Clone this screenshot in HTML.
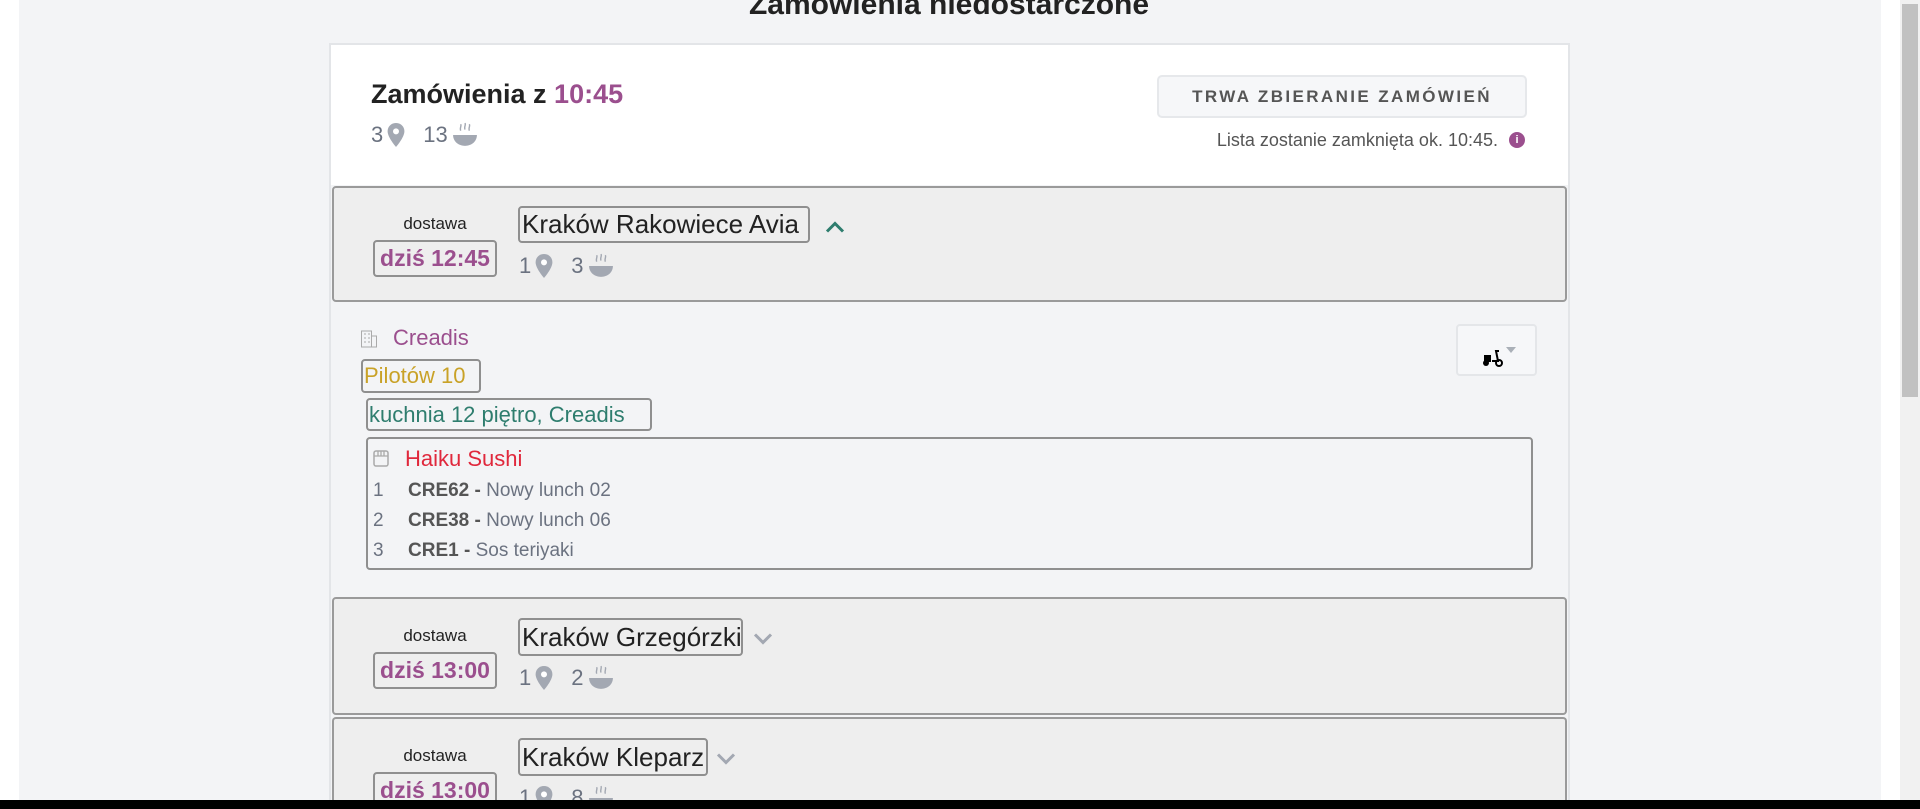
<!DOCTYPE html>
<html style="width:1920px;height:809px;overflow:hidden"><head><meta charset="utf-8"><style>
*{box-sizing:border-box;margin:0;padding:0}
html,body{width:1920px;height:809px;overflow:hidden}
body{background:#fff;font-family:"Liberation Sans",sans-serif;position:relative;color:#222;white-space:nowrap}
.a{position:absolute}
.bg{left:19px;top:0;width:1862px;height:809px;background:#f3f4f6}
.sb{left:1900px;top:0;width:20px;height:809px;background:#f1f1f1}
.thumb{left:1902px;top:4px;width:16px;height:393px;background:#c1c1c1}
.card{left:329px;top:43px;width:1241px;height:766px;background:#f3f4f6;border:2px solid #e3e5e8;border-bottom:none}
.hdr{left:331px;top:45px;width:1237px;height:140px;background:#fff}
.grp{background:#eeeeee;border:2px solid #9a9a9a;border-radius:4px;left:332px;width:1235px}
.bx{border:2px solid #8f8f8f;border-radius:4px}
.pur{color:#9b4f8e}
.gray{color:#6b7280}
.cnt{font-size:22px;color:#6b7280;display:flex;align-items:center;gap:4px}
</style></head><body>
<div class="a bg"></div>
<div class="a sb"></div><div class="a thumb"></div>
<div class="a" style="left:0;top:-12px;width:1898px;text-align:center;font-size:30px;font-weight:bold;color:#222">Zamówienia niedostarczone</div>
<div class="a card"></div>
<div class="a hdr"></div>
<div class="a" style="left:371px;top:79px;font-size:27px;font-weight:bold">Zamówienia z <span class="pur">10:45</span></div>

<svg width="0" height="0" style="position:absolute"><defs>
<symbol id="pin" viewBox="0 0 14 20"><path d="M7 0C3 0 0 3 0 7c0 5 7 13 7 13s7-8 7-13C14 3 11 0 7 0z" fill="#a3a8b2"/><circle cx="7" cy="7" r="2.5" fill="#fff"/></symbol>
<symbol id="bowl" viewBox="0 0 24 24"><path d="M1 12h22c0 6-5 10-11 10S1 18 1 12z" fill="#a3a8b2"/><path d="M8 2c1 2-1 3 0 6M12 1c1 2-1 3 0 6M16 2c1 2-1 3 0 6" stroke="#a3a8b2" stroke-width="1.3" fill="none"/></symbol>
<symbol id="chev" viewBox="0 0 20 12"><path d="M2 10l8-8 8 8" stroke="currentColor" stroke-width="3" fill="none"/></symbol>
</defs></svg>

<div class="a cnt" style="left:371px;top:122px">3 <svg width="18" height="24"><use href="#pin"/></svg><span style="margin-left:14px">13</span><svg width="26" height="26"><use href="#bowl"/></svg></div>

<div class="a" style="left:1157px;top:75px;width:370px;height:43px;background:#f6f7f9;border:2px solid #e6e8eb;border-radius:5px;font-size:17px;font-weight:bold;letter-spacing:2.4px;color:#555;text-align:center;line-height:39px">TRWA ZBIERANIE ZAMÓWIEŃ</div>
<div class="a" style="left:1100px;top:130px;width:398px;text-align:right;font-size:18px;color:#555">Lista zostanie zamknięta ok. 10:45.</div>
<div class="a" style="left:1509px;top:132px;width:16px;height:16px;border-radius:50%;background:#9b4f8e;color:#fff;font-size:11px;font-weight:bold;text-align:center;line-height:16px">i</div>

<!-- group 1 -->
<div class="a grp" style="top:186px;height:116px"></div>
<div class="a" style="left:385px;top:214px;width:100px;text-align:center;font-size:17px">dostawa</div>
<div class="a bx pur" style="left:373px;top:240px;width:124px;height:37px;font-size:23px;font-weight:bold;text-align:center;line-height:33px">dziś 12:45</div>
<div class="a bx" style="left:518px;top:206px;width:292px;height:37px;font-size:26px;line-height:33px;padding-left:2px">Kraków Rakowiece Avia</div>
<svg class="a" style="left:825px;top:221px;color:#2e7d6e" width="20" height="13"><use href="#chev"/></svg>
<div class="a cnt" style="left:519px;top:253px">1 <svg width="18" height="24"><use href="#pin"/></svg><span style="margin-left:14px">3</span><svg width="26" height="26"><use href="#bowl"/></svg></div>

<!-- expanded -->
<svg class="a" style="left:361px;top:330px" width="16" height="18"><rect x="0.5" y="1" width="10" height="16" fill="none" stroke="#aaa"/><rect x="10.5" y="6" width="5" height="11" fill="none" stroke="#aaa"/><path d="M3 4h2M7 4h2M3 8h2M7 8h2M3 12h2M7 12h2" stroke="#aaa"/></svg>
<div class="a pur" style="left:393px;top:325px;font-size:22px">Creadis</div>
<div class="a bx" style="left:361px;top:359px;width:120px;height:34px;font-size:22px;color:#c9a227;line-height:30px;padding-left:1px">Pilotów 10</div>
<div class="a bx" style="left:366px;top:398px;width:286px;height:33px;font-size:22px;color:#2e7d6e;line-height:29px;padding-left:1px">kuchnia 12 piętro, Creadis</div>
<div class="a bx" style="left:366px;top:437px;width:1167px;height:133px"></div>
<svg class="a" style="left:373px;top:450px" width="16" height="17"><rect x="1" y="1" width="14" height="15" rx="2" fill="none" stroke="#aaa" stroke-width="1.5"/><path d="M1 6h14M5 1v5M8 1v5M11 1v5" stroke="#aaa" stroke-width="1.3"/></svg>
<div class="a" style="left:405px;top:446px;font-size:22px;color:#e0283c">Haiku Sushi</div>
<div class="a gray" style="left:373px;top:476px;font-size:19px;line-height:30px">1<br>2<br>3</div>
<div class="a gray" style="left:408px;top:476px;font-size:19px;line-height:30px"><b style="color:#555">CRE62 -</b> Nowy lunch 02<br><b style="color:#555">CRE38 -</b> Nowy lunch 06<br><b style="color:#555">CRE1 -</b> Sos teriyaki</div>
<div class="a" style="left:1456px;top:324px;width:81px;height:52px;border:2px solid #e4e6e9;border-radius:4px;background:#f6f7f9"></div>
<svg class="a" style="left:1482px;top:347px" width="38" height="22"><path d="M2 8h7v7H2z" fill="#000"/><circle cx="4" cy="16" r="3" fill="#000"/><path d="M10 14h6l-2-10h3" stroke="#000" stroke-width="2" fill="none"/><circle cx="17" cy="16" r="3" fill="none" stroke="#000" stroke-width="2"/><path d="M24 0h10l-5 6z" fill="#aab0b8"/></svg>

<!-- group 2 -->
<div class="a grp" style="top:597px;height:118px"></div>
<div class="a" style="left:385px;top:626px;width:100px;text-align:center;font-size:17px">dostawa</div>
<div class="a bx pur" style="left:373px;top:652px;width:124px;height:37px;font-size:23px;font-weight:bold;text-align:center;line-height:33px">dziś 13:00</div>
<div class="a bx" style="left:518px;top:618px;width:225px;height:38px;font-size:26px;line-height:34px;padding-left:2px">Kraków Grzegórzki</div>
<svg class="a" style="left:753px;top:633px;color:#a3a8b2" width="20" height="13"><use href="#chev" transform="rotate(180 10 6)"/></svg>
<div class="a cnt" style="left:519px;top:665px">1 <svg width="18" height="24"><use href="#pin"/></svg><span style="margin-left:14px">2</span><svg width="26" height="26"><use href="#bowl"/></svg></div>

<!-- group 3 -->
<div class="a grp" style="top:717px;height:92px;border-bottom:none;border-radius:4px 4px 0 0"></div>
<div class="a" style="left:385px;top:746px;width:100px;text-align:center;font-size:17px">dostawa</div>
<div class="a bx pur" style="left:373px;top:772px;width:124px;height:37px;font-size:23px;font-weight:bold;text-align:center;line-height:33px">dziś 13:00</div>
<div class="a bx" style="left:518px;top:738px;width:190px;height:38px;font-size:26px;line-height:34px;padding-left:2px">Kraków Kleparz</div>
<svg class="a" style="left:716px;top:753px;color:#a3a8b2" width="20" height="13"><use href="#chev" transform="rotate(180 10 6)"/></svg>
<div class="a cnt" style="left:519px;top:785px">1 <svg width="18" height="24"><use href="#pin"/></svg><span style="margin-left:14px">8</span><svg width="26" height="26"><use href="#bowl"/></svg></div>

<div class="a" style="left:0;top:800px;width:1920px;height:9px;background:#000"></div>
</body></html>
